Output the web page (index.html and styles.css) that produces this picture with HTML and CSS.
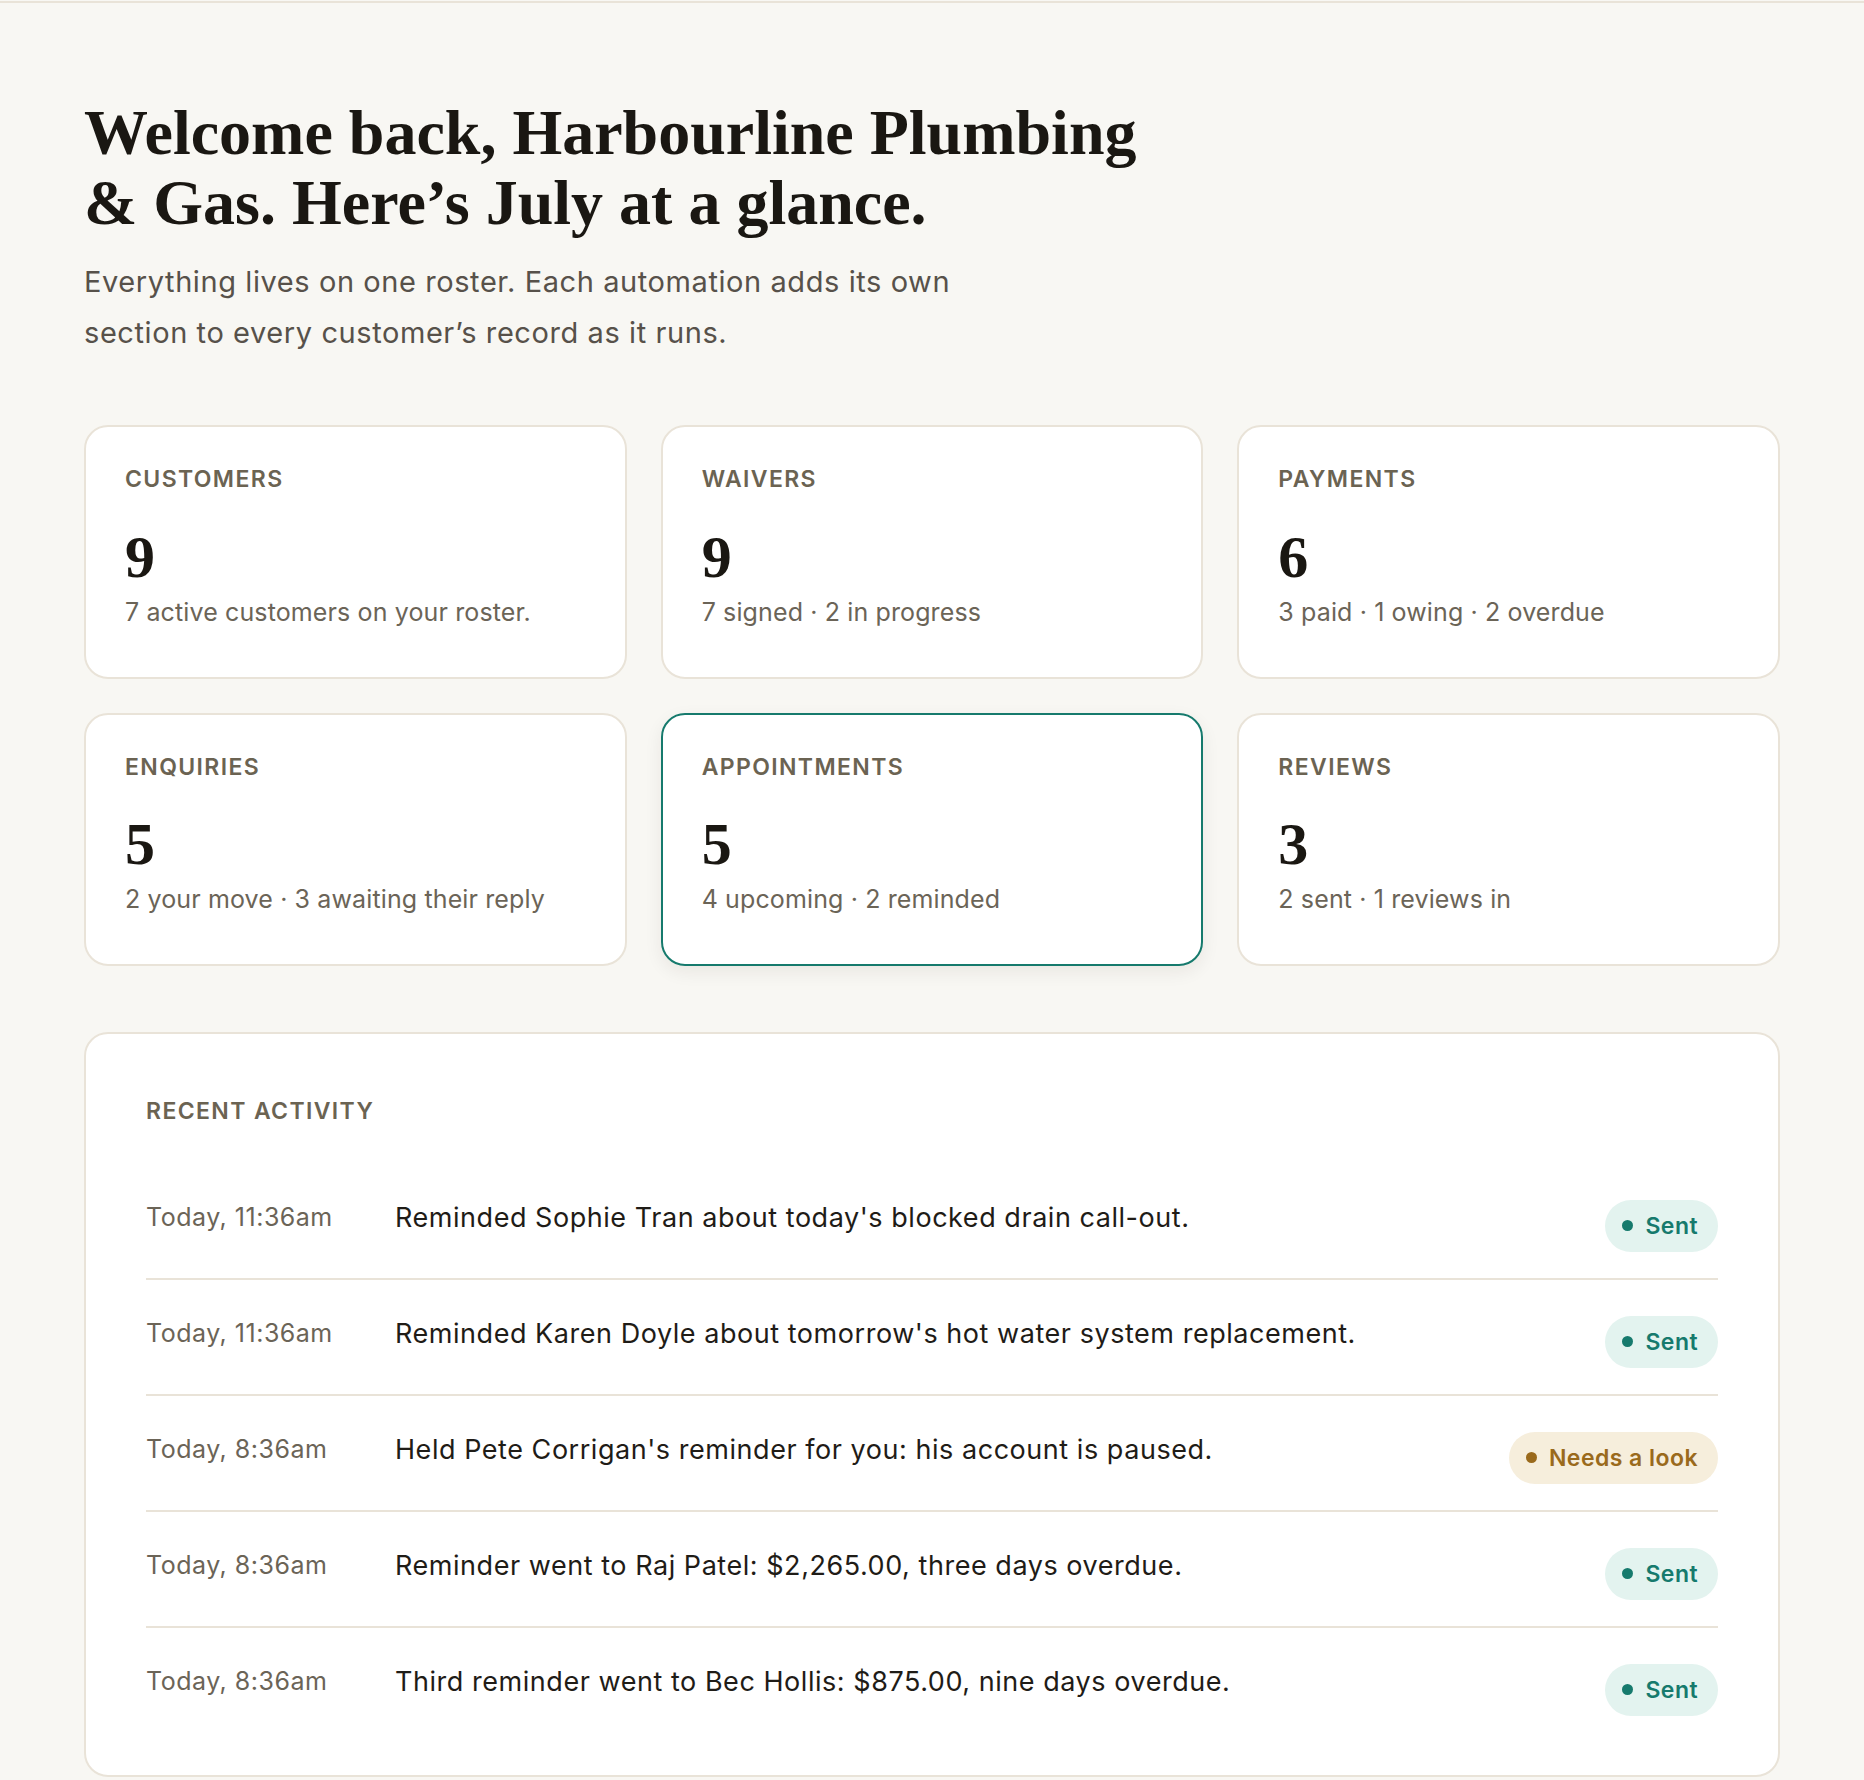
FILE: index.html
```html
<!DOCTYPE html>
<html lang="en">
<head>
    <meta charset="UTF-8">
    <meta name="viewport" content="width=device-width, initial-scale=1.0">
    <title>Harbourline Plumbing &amp; Gas - Overview</title>

    <link rel="stylesheet" href="styles.css">
</head>
<body>
    <div class="topline"></div>

    <main class="page">
        <header class="intro">
            <h1>Welcome back, Harbourline Plumbing &amp; Gas. Here’s July at a glance.</h1>
            <p>Everything lives on one roster. Each automation adds its own section to every customer’s record as it runs.</p>
        </header>

        <section class="stats">
            <div class="stat-card">
                <h3>Customers</h3>
                <div class="stat-value">9</div>
                <p>7 active customers on your roster.</p>
            </div>
            <div class="stat-card">
                <h3>Waivers</h3>
                <div class="stat-value">9</div>
                <p>7 signed · 2 in progress</p>
            </div>
            <div class="stat-card">
                <h3>Payments</h3>
                <div class="stat-value">6</div>
                <p>3 paid · 1 owing · 2 overdue</p>
            </div>
            <div class="stat-card">
                <h3>Enquiries</h3>
                <div class="stat-value">5</div>
                <p>2 your move · 3 awaiting their reply</p>
            </div>
            <div class="stat-card active">
                <h3>Appointments</h3>
                <div class="stat-value">5</div>
                <p>4 upcoming · 2 reminded</p>
            </div>
            <div class="stat-card">
                <h3>Reviews</h3>
                <div class="stat-value">3</div>
                <p>2 sent · 1 reviews in</p>
            </div>
        </section>

        <section class="activity">
            <h3>Recent activity</h3>
            <ul class="activity-list">
                <li>
                    <span class="when">Today, 11:36am</span>
                    <span class="what">Reminded Sophie Tran about today's blocked drain call-out.</span>
                    <span class="pill sent">Sent</span>
                </li>
                <li>
                    <span class="when">Today, 11:36am</span>
                    <span class="what">Reminded Karen Doyle about tomorrow's hot water system replacement.</span>
                    <span class="pill sent">Sent</span>
                </li>
                <li>
                    <span class="when">Today, 8:36am</span>
                    <span class="what">Held Pete Corrigan's reminder for you: his account is paused.</span>
                    <span class="pill warn">Needs a look</span>
                </li>
                <li>
                    <span class="when">Today, 8:36am</span>
                    <span class="what">Reminder went to Raj Patel: $2,265.00, three days overdue.</span>
                    <span class="pill sent">Sent</span>
                </li>
                <li>
                    <span class="when">Today, 8:36am</span>
                    <span class="what">Third reminder went to Bec Hollis: $875.00, nine days overdue.</span>
                    <span class="pill sent">Sent</span>
                </li>
            </ul>
        </section>
    </main>
</body>
</html>
```

FILE: styles.css
```css
* {
    margin: 0;
    padding: 0;
    box-sizing: border-box;
}

body {
    font-family: 'Inter', 'Noto Sans', sans-serif;
    background: #f8f7f3;
    color: #1f1c17;
}

.topline {
    height: 3px;
    border-bottom: 2px solid #e9e3d8;
}

.page {
    padding: 95px 84px 0;
}

/* Greeting */
.intro h1 {
    font-family: 'Liberation Serif', 'DejaVu Serif', serif;
    font-weight: 700;
    font-size: 64px;
    line-height: 70px;
    color: #1a1712;
    max-width: 1100px;
}

.intro p {
    margin-top: 18px;
    max-width: 900px;
    font-size: 29px;
    line-height: 51px;
    letter-spacing: 0.02em;
    color: #57514a;
}

/* Counters */
.stats {
    display: grid;
    grid-template-columns: repeat(3, 1fr);
    gap: 34px;
    margin-top: 67px;
}

.stat-card {
    background: #fff;
    border: 2px solid #e9e3d8;
    border-radius: 24px;
    padding: 39px 39px 47px;
}

.stat-card.active {
    border-color: #167a6d;
    box-shadow: 0 6px 18px rgba(40, 35, 20, 0.07);
}

.stat-card h3,
.activity h3 {
    font-size: 23px;
    line-height: 1.2;
    font-weight: 600;
    letter-spacing: 0.06em;
    text-transform: uppercase;
    color: #6b6352;
}

.stat-value {
    margin-top: 33px;
    font-family: 'Liberation Serif', 'DejaVu Serif', serif;
    font-weight: 700;
    font-size: 60px;
    line-height: 1;
    color: #1a1712;
}

.stat-card p {
    margin-top: 8px;
    font-size: 25px;
    line-height: 35px;
    letter-spacing: 0.005em;
    color: #6b6457;
}

/* Activity feed */
.activity {
    margin-top: 66px;
    background: #fff;
    border: 2px solid #e9e3d8;
    border-radius: 24px;
    padding: 64px 60px 33px;
}

.activity h3 {
    margin-bottom: 38px;
}

.activity-list {
    list-style: none;
}

.activity-list li {
    display: grid;
    grid-template-columns: 221px 1fr auto;
    column-gap: 28px;
    align-items: start;
    padding: 34px 0 26px;
    border-bottom: 2px solid #e9e3d8;
}

.activity-list li:last-child {
    border-bottom: none;
}

.when {
    font-size: 25px;
    line-height: 39px;
    letter-spacing: 0.02em;
    color: #6b6457;
}

.what {
    font-size: 27px;
    line-height: 39px;
    letter-spacing: 0.02em;
    color: #1f1c17;
}

.pill {
    display: inline-flex;
    align-items: center;
    gap: 12px;
    height: 52px;
    margin-top: 2px;
    padding: 0 20px 0 17px;
    border-radius: 26px;
    font-size: 23px;
    font-weight: 600;
    letter-spacing: 0.02em;
    white-space: nowrap;
}

.pill::before {
    content: "";
    width: 11px;
    height: 11px;
    border-radius: 50%;
    background: currentColor;
}

.pill.sent {
    background: #e3f3ef;
    color: #167a6d;
}

.pill.warn {
    background: #f6eedc;
    color: #9a6a1c;
}
```
